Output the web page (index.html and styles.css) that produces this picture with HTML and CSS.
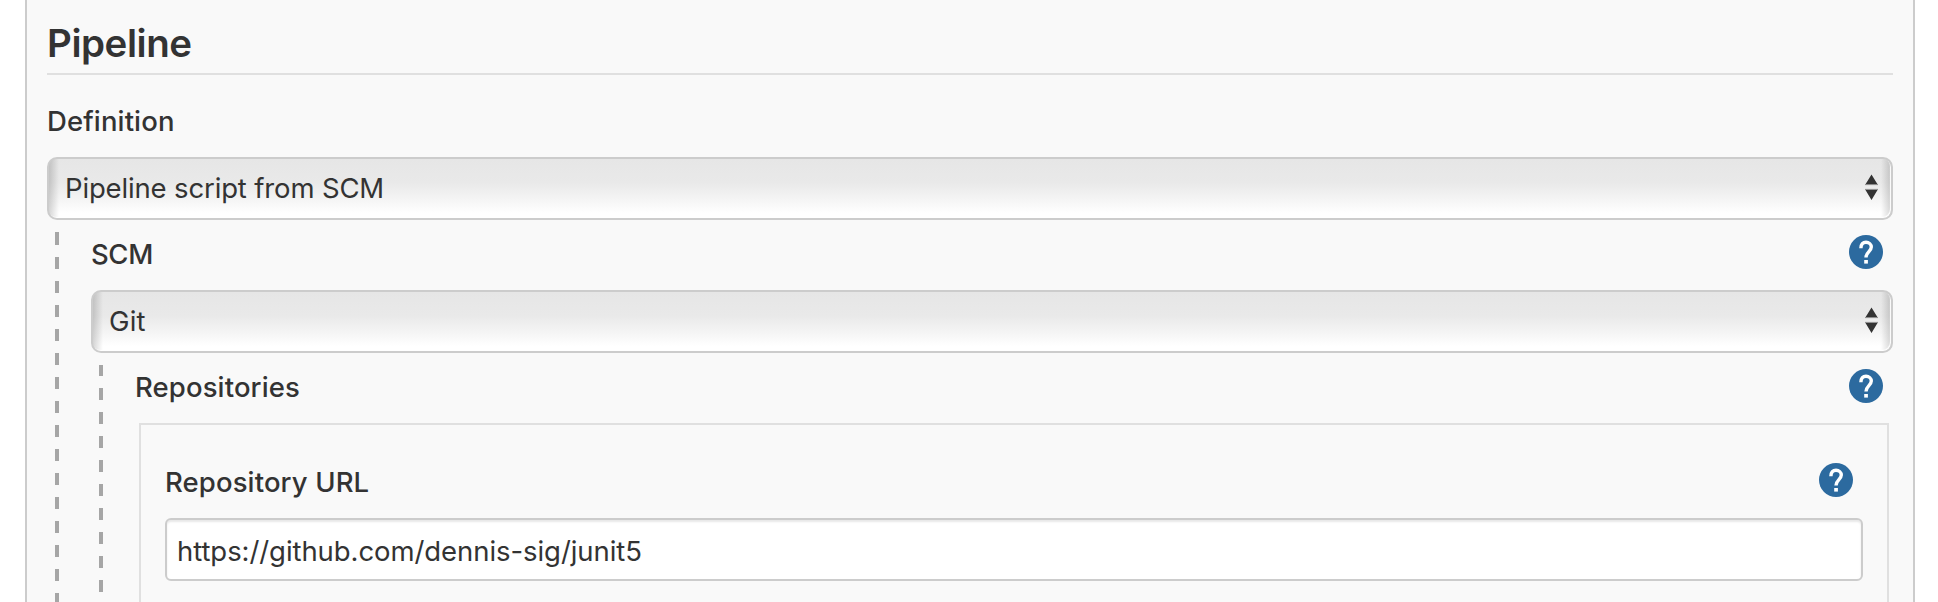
FILE: index.html
```
<!DOCTYPE html>
<html lang="en">
<head>
<meta charset="utf-8">
<title>Pipeline</title>
<link rel="stylesheet" href="styles.css">
</head>
<body>
<svg class="defs" aria-hidden="true">
  <symbol id="help" viewBox="0 0 34 34">
    <circle cx="17" cy="17" r="17" fill="#2c6a9f"/>
    <path d="M11.900 13.200C11.900 9.300 14 7.200 17 7.200s5.300 2.200 5.300 4.900c0 4.300-5.300 4.900-5.300 10.400" fill="none" stroke="#fff" stroke-width="3.400"/>
    <rect x="15.200" y="25" width="3.700" height="3.600" fill="#fff"/>
  </symbol>
  <symbol id="arrows" viewBox="0 0 14 28">
    <path d="M7.500.5l6 9.700h-12zM1.500 16h12l-6 10z" fill="#333"/>
    <path d="M1 10.600h13M1 15.400h13" stroke="#888" stroke-width="1"/>
  </symbol>
</svg>
<main class="panel">
  <h1 class="heading">Pipeline</h1>
  <div class="row row-definition"><span class="label">Definition</span></div>
  <div class="select"><span class="value">Pipeline script from SCM</span><svg class="arrows"><use href="#arrows"/></svg></div>
  <section class="nested">
    <div class="rail rail-outer"></div>
    <div class="content">
      <div class="row"><span class="label scm">SCM</span><svg class="help"><use href="#help"/></svg></div>
      <div class="select"><span class="value git">Git</span><svg class="arrows"><use href="#arrows"/></svg></div>
      <section class="nested">
        <div class="rail rail-inner"></div>
        <div class="content">
          <div class="row row-repositories"><span class="label">Repositories</span><svg class="help"><use href="#help"/></svg></div>
          <div class="repository">
            <div class="row"><span class="label">Repository URL</span><svg class="help"><use href="#help"/></svg></div>
            <div class="input"><span class="address">https://github.com/dennis-sig/junit5</span></div>
          </div>
        </div>
      </section>
    </div>
  </section>
</main>
</body>
</html>
```
FILE: styles.css
```
* { box-sizing: border-box; }
body {
  margin: 0;
  height: 602px;
  overflow: hidden;
  background: #fff;
  color: #333;
  font: 400 27.500px/34px Inter, "Liberation Sans", sans-serif;
}
.defs { display: none; }
.panel {
  height: 602px;
  margin: 0 23px 0 25px;
  padding: 0 20px;
  overflow: hidden;
  background: #f9f9f9;
  border: solid #ccc;
  border-width: 0 2px;
}
.heading {
  height: 75px;
  margin: 0;
  padding-top: 19px;
  border-bottom: 2px solid #e0e0e0;
  font-size: 38.500px;
  font-weight: 600;
  line-height: 48px;
  letter-spacing: -.45px;
}
.row {
  display: flex;
  justify-content: space-between;
  height: 70px;
  padding: 15px 10px 0 0;
}
.row-definition { height: 82px; padding-top: 29px; }
.label { font-weight: 500; padding-top: 2px; letter-spacing: .12px; }
.row-definition .label { padding-top: 0; }
.scm { letter-spacing: -.4px; }
.help { width: 34px; height: 34px; }
.row-repositories .help { margin-top: 1px; }
.select {
  display: flex;
  align-items: center;
  justify-content: space-between;
  height: 63px;
  padding: 0 13px 1px 16px;
  border: 2px solid #ccc;
  border-radius: 10px;
  background:
    linear-gradient(to right, rgba(0,0,0,.16), rgba(0,0,0,0) 10px, rgba(0,0,0,0) calc(100% - 10px), rgba(0,0,0,.16)),
    linear-gradient(#e6e6e6, #e9e9e9 40%, #f3f3f3 65%, #fff 92%);
  box-shadow: inset -1px -1px 1px #fff;
}
.value { letter-spacing: -.15px; }
.git { letter-spacing: .2px; }
.arrows { width: 14px; height: 28px; }
.nested { display: flex; }
.rail {
  flex: none;
  width: 4px;
  margin: 12px 32px 0 8px;
}
.rail-outer {
  border-top: 1px solid #a6a6a6;
  background: repeating-linear-gradient(#a6a6a6 0 12px, transparent 12px 24px) no-repeat;
}
.rail-inner {
  height: 227px;
  background: repeating-linear-gradient(#a6a6a6 0 11px, transparent 11px 23px, #a6a6a6 23px 24px);
}
.content { flex: 1; min-width: 0; }
.repository {
  height: 240px;
  margin: 0 4px;
  padding: 23px 24px 0;
  border: 2px solid #e0e0e0;
}
.input {
  display: flex;
  align-items: center;
  height: 63px;
  padding: 3px 10px 0;
  border: 2px solid #ccc;
  border-radius: 6px;
  background: #fff;
  box-shadow: inset 0 2px 2px #e8e8e8;
}
.address { letter-spacing: -.07px; }
```
